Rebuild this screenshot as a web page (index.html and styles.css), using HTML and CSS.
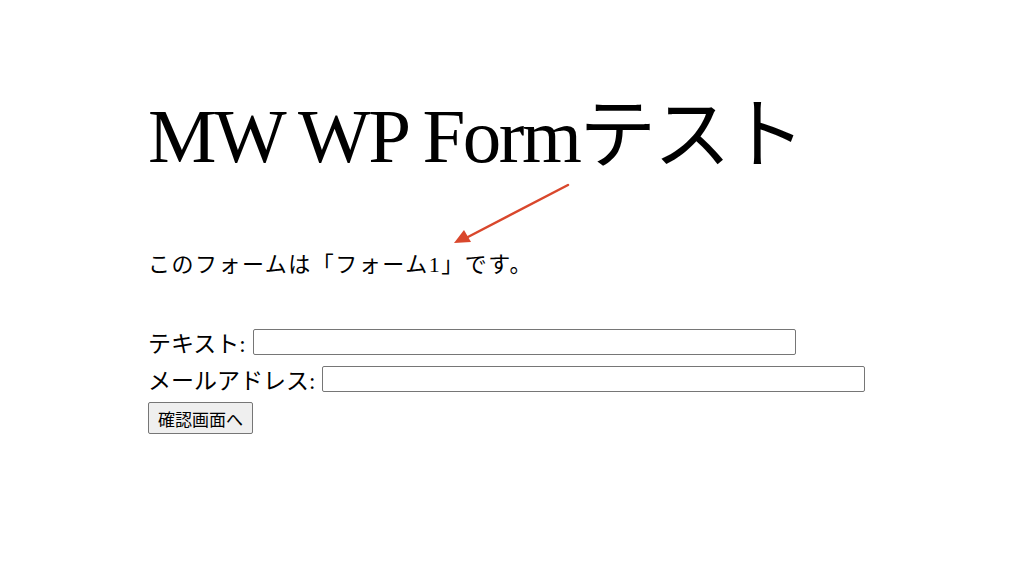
FILE: index.html
```html
<!DOCTYPE html>
<html lang="ja">
<head>
  <meta charset="utf-8">
  <title>MW WP Formテスト</title>
  <link rel="stylesheet" href="styles.css">
</head>
<body>
  <div class="page">
    <h1 class="title">MW WP Formテスト</h1>
    <p class="lead">このフォームは「フォーム1」です。</p>
    <form class="form">
      <div class="row">
        <label for="text1">テキスト:</label>
        <input type="text" id="text1" class="field">
      </div>
      <div class="row">
        <label for="mail1">メールアドレス:</label>
        <input type="text" id="mail1" class="field">
      </div>
      <div class="submit">
        <button type="button" class="btn">確認画面へ</button>
      </div>
    </form>
  </div>
  <!-- 注釈の矢印 -->
  <svg class="arrow" width="130" height="75" viewBox="0 0 130 75">
    <line x1="122" y1="5" x2="20" y2="58" stroke="#d9472c" stroke-width="2.5" stroke-linecap="round"/>
    <polygon points="8,63 18,50 25,62" fill="#d9472c"/>
  </svg>
</body>
</html>
```
FILE: styles.css
```css
body{
  margin: 0;
  background: #fff;
  color: #000;
  font-family: "Liberation Serif", "Noto Sans CJK JP", serif;
}
.page{
  padding: 86px 0 0 148px;
}
.title{
  margin: 0;
  font-size: 77px;
  font-weight: normal;
  letter-spacing: -2.5px;
  line-height: 100px;
}
.lead{
  margin: 64px 0 0 0;
  font-size: 22px;
  line-height: 30px;
  letter-spacing: 1.5px;
}
.form{
  margin-top: 43px;
  font-size: 23px;
}
.row{
  display: flex;
  align-items: center;
  height: 37px;
}
.row label{
  margin-right: 7px;
}
.field{
  width: 541px;
  height: 24px;
  padding: 0;
  border: 1px solid #767676;
  border-radius: 2px;
  font-size: 16px;
}
.submit{
  padding-top: 5px;
}
.btn{
  height: 32px;
  padding: 0 9px;
  border: 1px solid #767676;
  border-radius: 2px;
  background-color: #efefef;
  font-family: "Noto Sans CJK JP", sans-serif;
  font-size: 17px;
  color: #000;
}
.arrow{
  position: absolute;
  left: 446px;
  top: 180px;
}
```
